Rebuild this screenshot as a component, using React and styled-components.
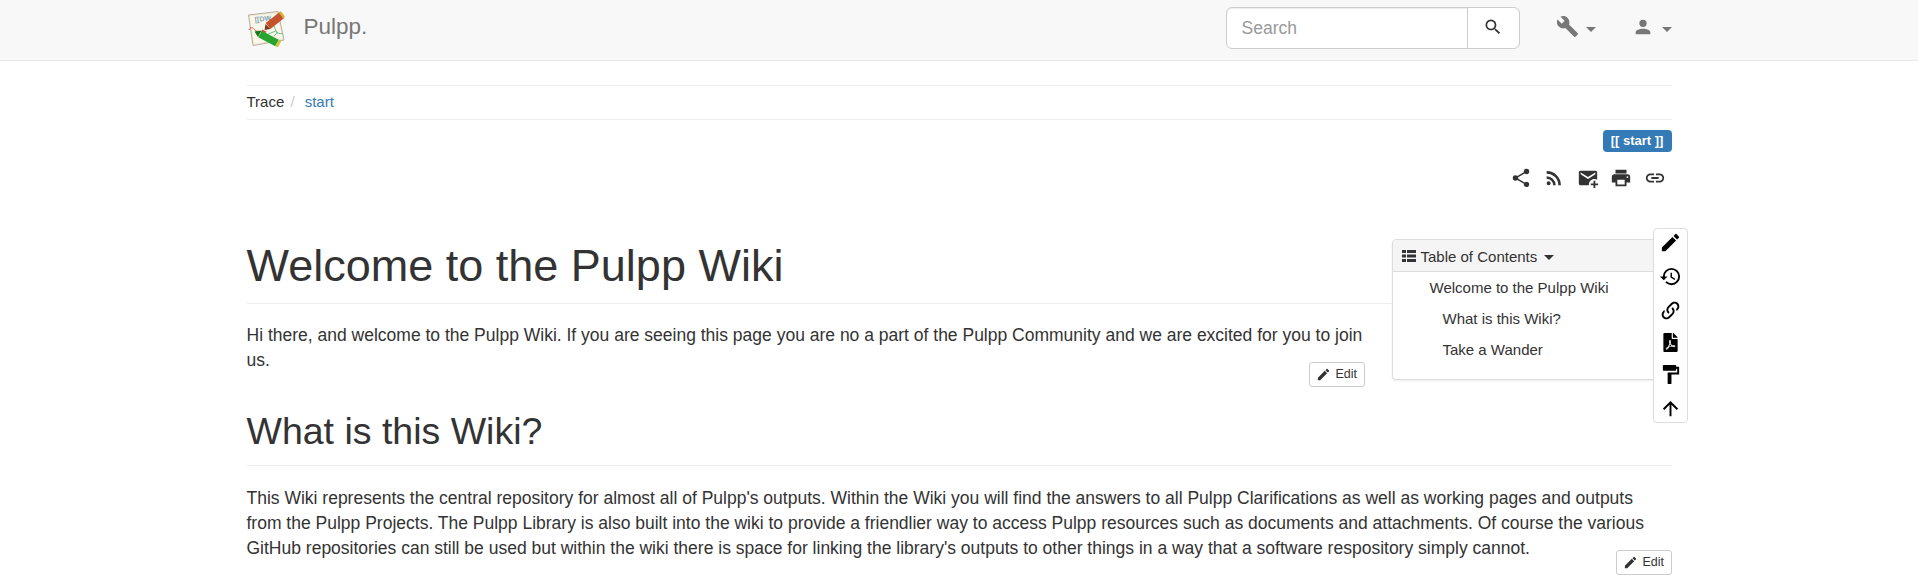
import React from "react";
import styled, { createGlobalStyle } from "styled-components";
import { FaFilePdf } from "react-icons/fa";

const P = {
  magnify: "M9.5,3A6.5,6.5 0 0,1 16,9.5C16,11.11 15.41,12.59 14.44,13.73L14.71,14H15.5L20.5,19L19,20.5L14,15.5V14.71L13.73,14.44C12.59,15.41 11.11,16 9.5,16A6.5,6.5 0 0,1 3,9.5A6.5,6.5 0 0,1 9.5,3M9.5,5C7,5 5,7 5,9.5C5,12 7,14 9.5,14C12,14 14,12 14,9.5C14,7 12,5 9.5,5Z",
  wrench: "M22.7,19L13.6,9.9C14.5,7.6 14,4.9 12.1,3C10.1,1 7.1,0.6 4.7,1.7L9,6L6,9L1.6,4.7C0.4,7.1 0.9,10.1 2.9,12.1C4.8,14 7.5,14.5 9.8,13.6L18.9,22.7C19.3,23.1 19.9,23.1 20.3,22.7L22.6,20.4C23.1,20 23.1,19.3 22.7,19Z",
  account: "M12,4A4,4 0 0,1 16,8A4,4 0 0,1 12,12A4,4 0 0,1 8,8A4,4 0 0,1 12,4M12,14C16.42,14 20,15.79 20,18V20H4V18C4,15.79 7.58,14 12,14Z",
  share: "M18,16.08C17.24,16.08 16.56,16.38 16.04,16.85L8.91,12.7C8.96,12.47 9,12.24 9,12C9,11.76 8.96,11.53 8.91,11.3L15.96,7.19C16.5,7.69 17.21,8 18,8A3,3 0 0,0 21,5A3,3 0 0,0 18,2A3,3 0 0,0 15,5C15,5.24 15.04,5.47 15.09,5.7L8.04,9.81C7.5,9.31 6.79,9 6,9A3,3 0 0,0 3,12A3,3 0 0,0 6,15C6.79,15 7.5,14.69 8.04,14.19L15.16,18.34C15.11,18.55 15.08,18.77 15.08,19C15.08,20.61 16.39,21.91 18,21.91C19.61,21.91 20.92,20.61 20.92,19A2.92,2.92 0 0,0 18,16.08Z",
  rss: "M6.18,15.64A2.18,2.18 0 0,1 8.36,17.82C8.36,19 7.38,20 6.18,20C5,20 4,19 4,17.82A2.18,2.18 0 0,1 6.18,15.64M4,4.44A15.56,15.56 0 0,1 19.56,20H16.73A12.73,12.73 0 0,0 4,7.27V4.44M4,10.1A9.9,9.9 0 0,1 13.9,20H11.07A7.07,7.07 0 0,0 4,12.93V10.1Z",
  mailPlus: "M13 19C13 15.69 15.69 13 19 13C20.1 13 21.12 13.3 22 13.81V6C22 4.89 21.1 4 20 4H4C2.89 4 2 4.89 2 6V18C2 19.11 2.9 20 4 20H13.09C13.04 19.67 13 19.34 13 19M4 8V6L12 11L20 6V8L12 13L4 8M20 15V18H23V20H20V23H18V20H15V18H18V15H20Z",
  printer: "M18,3H6V7H18M19,12A1,1 0 0,1 18,11A1,1 0 0,1 19,10A1,1 0 0,1 20,11A1,1 0 0,1 19,12M16,19H8V14H16M19,8H5A3,3 0 0,0 2,11V17H6V21H18V17H22V11A3,3 0 0,0 19,8Z",
  link: "M3.9,12C3.9,10.29 5.29,8.9 7,8.9H11V7H7A5,5 0 0,0 2,12A5,5 0 0,0 7,17H11V15.1H7C5.29,15.1 3.9,13.71 3.9,12M8,13H16V11H8V13M17,7H13V8.9H17C18.71,8.9 20.1,10.29 20.1,12C20.1,13.71 18.71,15.1 17,15.1H13V17H17A5,5 0 0,0 22,12A5,5 0 0,0 17,7Z",
  pencil: "M20.71,7.04C21.1,6.65 21.1,6 20.71,5.63L18.37,3.29C18,2.9 17.35,2.9 16.96,3.29L15.12,5.12L18.87,8.87M3,17.25V21H6.75L17.81,9.93L14.06,6.18L3,17.25Z",
  history: "M13.5,8H12V13L16.28,15.54L17,14.33L13.5,12.25V8M13,3A9,9 0 0,0 4,12H1L4.96,16.03L9,12H6A7,7 0 0,1 13,5A7,7 0 0,1 20,12A7,7 0 0,1 13,19C11.07,19 9.32,18.21 8.06,16.94L6.64,18.36C8.27,20 10.5,21 13,21A9,9 0 0,0 22,12A9,9 0 0,0 13,3",
  linkVariant: "M10.59,13.41C11,13.8 11,14.44 10.59,14.83C10.2,15.22 9.56,15.22 9.17,14.83C7.22,12.88 7.22,9.71 9.17,7.76V7.76L12.71,4.22C14.66,2.27 17.83,2.27 19.78,4.22C21.73,6.17 21.73,9.34 19.78,11.29L18.29,12.78C18.3,11.96 18.17,11.14 17.89,10.36L18.36,9.88C19.54,8.71 19.54,6.81 18.36,5.64C17.19,4.46 15.29,4.46 14.12,5.64L10.59,9.17C9.41,10.34 9.41,12.24 10.59,13.41M13.41,9.17C13.8,8.78 14.44,8.78 14.83,9.17C16.78,11.12 16.78,14.29 14.83,16.24V16.24L11.29,19.78C9.34,21.73 6.17,21.73 4.22,19.78C2.27,17.83 2.27,14.66 4.22,12.71L5.71,11.22C5.7,12.04 5.83,12.86 6.11,13.65L5.64,14.12C4.46,15.29 4.46,17.19 5.64,18.36C6.81,19.54 8.71,19.54 9.88,18.36L13.41,14.83C14.59,13.66 14.59,11.76 13.41,10.59C13,10.2 13,9.56 13.41,9.17Z",
  paint: "M18,4V3A1,1 0 0,0 17,2H5A1,1 0 0,0 4,3V7A1,1 0 0,0 5,8H17A1,1 0 0,0 18,7V6H19V10H9V21A1,1 0 0,0 10,22H12A1,1 0 0,0 13,21V12H21V4H18Z",
  arrowUp: "M13,20H11V8L5.5,13.5L4.08,12.08L12,4.16L19.92,12.08L18.5,13.5L13,8V20Z",
};

const Global = createGlobalStyle`
  * { box-sizing: border-box; }
  html, body { margin: 0; padding: 0; background: #fff; overflow: hidden; }
  body { font-family: "Liberation Sans", Arial, sans-serif; font-size: 17.5px; line-height: 25px; color: #333; }
`;

const Container = styled.div`
  width: 1455px;
  margin: 0 auto;
  padding: 0 15px;
`;

const NavBar = styled.nav`
  height: 61px;
  background: #f8f8f8;
  border-bottom: 1px solid #e7e7e7;
`;

const NavInner = styled(Container)`
  display: flex;
  align-items: center;
  height: 60px;
  padding-bottom: 4px;
`;

const Brand = styled.div`
  display: flex;
  align-items: center;
  gap: 18px;
  color: #777;
  font-size: 22.5px;
  line-height: 1;
`;

const BrandName = styled.span`
  margin-bottom: 1px;
`;

const SearchForm = styled.form`
  display: flex;
  margin: 0 36px 0 auto;
`;

const SearchInput = styled.input`
  width: 242px;
  height: 42px;
  padding: 0 15px;
  border: 1px solid #ccc;
  border-radius: 6px 0 0 6px;
  background: #fff;
  box-shadow: inset 0 1px 1px rgba(0, 0, 0, 0.075);
  font: 17.5px "Liberation Sans", Arial, sans-serif;
  &::placeholder { color: #999; opacity: 1; }
`;

const SearchButton = styled.button`
  display: flex;
  align-items: center;
  justify-content: center;
  width: 53px;
  height: 42px;
  margin-left: -1px;
  padding: 0 0 2px;
  border: 1px solid #ccc;
  border-radius: 0 6px 6px 0;
  background: #fff;
  color: #333;
`;

const NavMenu = styled.div`
  display: flex;
  align-items: center;
  gap: ${(p) => p.$space}px;
  color: #777;
  margin-left: ${(p) => p.$gap}px;
  margin-bottom: 3px;
`;

const Caret = styled.span`
  display: inline-block;
  width: 0;
  height: 0;
  margin-top: ${(p) => p.$drop || 0}px;
  margin-left: ${(p) => p.$nudge || 0}px;
  border-top: 5px solid currentColor;
  border-left: 5px solid transparent;
  border-right: 5px solid transparent;
`;

const Icon = styled.svg`
  display: block;
  flex: none;
  fill: currentColor;
`;

const Crumbs = styled.ol`
  display: flex;
  align-items: center;
  height: 35px;
  margin: 24px 0 0;
  padding: 0 0 2px;
  list-style: none;
  border-top: 1px solid #eee;
  border-bottom: 1px solid #eee;
  font-size: 15px;
`;

const Crumb = styled.li`
  color: #333;
`;

const CrumbSep = styled.span`
  color: #ccc;
  margin: 0 10px 0 2px;
`;

const CrumbLink = styled.span`
  color: #337ab7;
`;

const PageTools = styled.div`
  display: flex;
  flex-direction: column;
  align-items: flex-end;
  padding-top: 10px;
`;

const PageBadge = styled.span`
  display: block;
  height: 22px;
  width: 69px;
  border-radius: 4px;
  background: #337ab7;
  color: #fff;
  font-size: 13px;
  font-weight: 700;
  line-height: 22px;
  text-align: center;
`;

const ToolRow = styled.div`
  display: flex;
  gap: 11.5px;
  margin: 15px 6px 0 0;
  color: #333;
`;

const Article = styled.article`
  position: relative;
  margin-top: 38px;
`;

const Toc = styled.aside`
  float: right;
  width: 280px;
  height: 141px;
  margin: 12px 0 0 27px;
  background: #fff;
  border: 1px solid #ddd;
  border-radius: 4px;
  box-shadow: 0 1px 2px rgba(0, 0, 0, 0.08);
  font-size: 15px;
  overflow: hidden;
`;

const TocHead = styled.div`
  display: flex;
  align-items: center;
  height: 32px;
  padding: 1px 0 0 9px;
  gap: 5px;
  background: #f5f5f5;
  border-bottom: 1px solid #ddd;
  color: #333;
`;

const TocList = styled.ul`
  margin: 0;
  padding: 0;
  list-style: none;
`;

const TocItem = styled.li`
  height: 31px;
  line-height: 32px;
  padding-left: ${(p) => p.$indent}px;
`;

const ToolStrip = styled.div`
  position: absolute;
  top: 1px;
  right: -16px;
  width: 35px;
  height: 195px;
  display: flex;
  flex-direction: column;
  align-items: center;
  justify-content: space-between;
  padding: 2px 0;
  background: #fff;
  border: 1px solid #ddd;
  border-radius: 4px;
  color: #000;
`;

const H1 = styled.h1`
  margin: 0 0 19px;
  padding: 12px 0 10px;
  height: 77px;
  border-bottom: 1px solid #eee;
  font-size: 45px;
  font-weight: 500;
  line-height: 54px;
`;

const H2 = styled.h2`
  margin: 24px 0 20px;
  padding-bottom: 13px;
  border-bottom: 1px solid #eee;
  font-size: 37.5px;
  font-weight: 500;
  line-height: 41px;
`;

const Para = styled.p`
  margin: 0;
`;

const SecEdit = styled.div`
  display: flow-root;
  margin-top: -11px;
`;

const EditButton = styled.div`
  float: right;
  display: flex;
  align-items: center;
  gap: 4px;
  height: 25px;
  padding: 0 6.5px;
  background: #fff;
  border: 1px solid #ccc;
  border-radius: 3px;
  color: #333;
  font-size: 12.5px;
`;

const Glyph = ({ d, size, vb = 24 }) => (
  <Icon width={size} height={size} viewBox={`0 0 ${vb} ${vb}`}>
    <path d={d} />
  </Icon>
);

const Logo = () => (
  <svg width="39" height="39" viewBox="0 0 39 39" style={{ display: "block" }}>
    <polygon points="1.5,6 31,2.5 37,31 6,36.5" fill="#f1ecd9" stroke="#b4b19f" strokeWidth="1" />
    <polygon points="3,7.5 30,4.5 35.5,29.5 7.5,35" fill="#fbf8ea" />
    <text x="8" y="13" fontSize="7" fontWeight="700" fill="#7e9fb5" fontFamily="Liberation Sans, sans-serif" transform="rotate(-6 8 13)">[[DW</text>
    <path d="M2 21 C4 16 7 20 9 22 L17 23" fill="none" stroke="#e8504c" strokeWidth="1" />
    <path d="M15 20.5 L20 23 L15 25 Z" fill="#e8383c" />
    <path d="M21 25 L29 22 M27 17 L30 24 L36 25 M27 27 L31 23" fill="none" stroke="#6cc48e" strokeWidth="1" />
    <line x1="21" y1="17" x2="35" y2="6" stroke="#c4552a" strokeWidth="7.5" />
    <polygon points="17.5,21 18.5,15 23.5,20" fill="#7c3a1e" />
    <line x1="34" y1="6.5" x2="36" y2="5" stroke="#d9b23c" strokeWidth="7" />
    <line x1="13" y1="25" x2="30" y2="34" stroke="#27a52f" strokeWidth="7.5" />
    <polygon points="7.5,22.5 14.5,21.5 11,28" fill="#157a1d" />
    <line x1="30" y1="34" x2="32.5" y2="35.3" stroke="#cfc23a" strokeWidth="7" />
  </svg>
);

const TableIcon = () => (
  <Icon width="14" height="12" viewBox="0 0 14 12">
    <path d="M0 0h4v3H0zM5 0h9v3H5zM0 4.5h4v3H0zM5 4.5h9v3H5zM0 9h4v3H0zM5 9h9v3H5z" />
  </Icon>
);

export default function App() {
  return (
    <>
      <Global />
      <NavBar>
        <NavInner>
          <Brand>
            <Logo />
            <BrandName>Pulpp.</BrandName>
          </Brand>
          <SearchForm>
            <SearchInput placeholder="Search" />
            <SearchButton type="button"><Glyph d={P.magnify} size={20} /></SearchButton>
          </SearchForm>
          <NavMenu $gap={0} $space={7}><Glyph d={P.wrench} size={23} /><Caret $drop={6} /></NavMenu>
          <NavMenu $gap={36} $space={8}><Glyph d={P.account} size={22} /><Caret $drop={6} /></NavMenu>
        </NavInner>
      </NavBar>
      <Container>
        <Crumbs>
          <Crumb>Trace<CrumbSep> /</CrumbSep></Crumb>
          <Crumb><CrumbLink>start</CrumbLink></Crumb>
        </Crumbs>
        <PageTools>
          <PageBadge>[[ start ]]</PageBadge>
          <ToolRow>
            <Glyph d={P.share} size={22} />
            <Glyph d={P.rss} size={22} />
            <Glyph d={P.mailPlus} size={22} />
            <Glyph d={P.printer} size={22} />
            <Glyph d={P.link} size={22} />
          </ToolRow>
        </PageTools>
        <Article>
          <ToolStrip>
            <Glyph d={P.pencil} size={23} />
            <Glyph d={P.history} size={23} />
            <Glyph d={P.linkVariant} size={23} />
            <FaFilePdf size={19} />
            <Glyph d={P.paint} size={23} />
            <Glyph d={P.arrowUp} size={23} />
          </ToolStrip>
          <Toc>
            <TocHead><TableIcon /><span>Table of Contents</span><Caret $drop={3} $nudge={2} /></TocHead>
            <TocList>
              <TocItem $indent={37}>Welcome to the Pulpp Wiki</TocItem>
              <TocItem $indent={50}>What is this Wiki?</TocItem>
              <TocItem $indent={50}>Take a Wander</TocItem>
            </TocList>
          </Toc>
          <H1>Welcome to the Pulpp Wiki</H1>
          <Para>Hi there, and welcome to the Pulpp Wiki. If you are seeing this page you are no a part of the Pulpp Community and we are excited for you to join us.</Para>
          <SecEdit>
            <EditButton><Glyph d={P.pencil} size={15} />Edit</EditButton>
          </SecEdit>
          <H2>What is this Wiki?</H2>
          <Para>This Wiki represents the central repository for almost all of Pulpp's outputs. Within the Wiki you will find the answers to all Pulpp Clarifications as well as working pages and outputs from the Pulpp Projects. The Pulpp Library is also built into the wiki to provide a friendlier way to access Pulpp resources such as documents and attachments. Of course the various GitHub repositories can still be used but within the wiki there is space for linking the library's outputs to other things in a way that a software respository simply cannot.</Para>
          <SecEdit>
            <EditButton><Glyph d={P.pencil} size={15} />Edit</EditButton>
          </SecEdit>
        </Article>
      </Container>
    </>
  );
}
